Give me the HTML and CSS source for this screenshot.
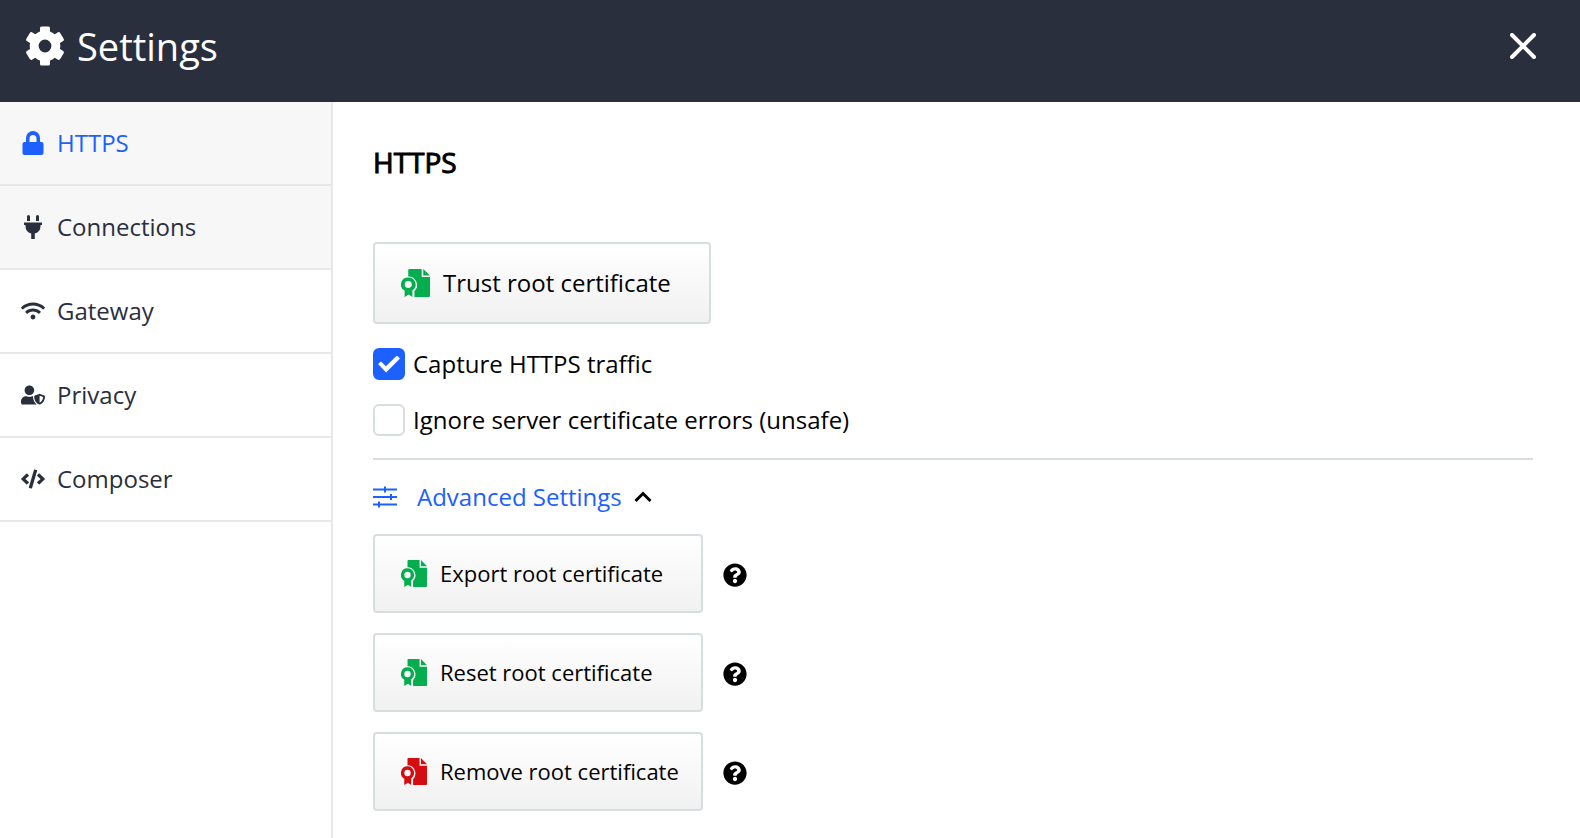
FILE: index.html
```html
<!DOCTYPE html>
<html lang="en">
<head>
<meta charset="utf-8">
<title>Settings</title>
<link rel="stylesheet" href="styles.css">
</head>
<body>
<svg class="sprite" aria-hidden="true">
  <symbol id="certificate" viewBox="0 0 28 28" preserveAspectRatio="none">
    <path d="M7 0H20V8H28V27A1 1 0 0 1 27 28H13V22A8.500 8.500 0 0 0 7 7.500V1A1 1 0 0 1 8 0Z"/>
    <path d="M21.500 0L28 6.500H21.500Z"/>
    <path fill-rule="evenodd" d="M7 8.500A7 7 0 0 1 11 21.300V28L7.500 25.600L3.500 28V21.600A7 7 0 0 1 7 8.500ZM7 12.100A3.400 3.400 0 1 0 7 18.900A3.400 3.400 0 1 0 7 12.100Z"/>
  </symbol>
  <symbol id="question" viewBox="0 0 512 512">
    <path d="M504 256c0 136.997-111.043 248-248 248S8 392.997 8 256C8 119.083 119.043 8 256 8s248 111.083 248 248zM262.655 90c-54.497 0-89.255 22.957-116.549 63.758-3.536 5.286-2.353 12.415 2.715 16.258l34.699 26.310c5.205 3.947 12.621 3.008 16.665-2.122 17.864-22.658 30.113-35.797 57.303-35.797 20.429 0 45.698 13.148 45.698 32.958 0 14.976-12.363 22.667-32.534 33.976C247.128 238.528 216 254.941 216 296v4c0 6.627 5.373 12 12 12h56c6.627 0 12-5.373 12-12v-1.333c0-28.462 83.186-29.647 83.186-106.667 0-58.002-60.165-102-116.531-102zM256 338c-25.365 0-46 20.635-46 46 0 25.364 20.635 46 46 46s46-20.636 46-46c0-25.365-20.635-46-46-46z"/>
  </symbol>
</svg>
<header class="topbar">
  <svg class="gear" viewBox="0 0 40 40" aria-hidden="true">
    <path fill-rule="evenodd" d="M15 2Q15 .5 16.500 .5H23.500Q25 .5 25 2V5.500Q27.600 6.400 29.700 8.300L33 6.300Q34.300 5.700 35.200 6.900L38.800 13Q39.300 14.300 38.200 15.100L35 17Q35.600 20 35 23L38.200 24.900Q39.300 25.700 38.800 27L35.200 33.100Q34.300 34.300 33 33.700L29.700 31.700Q27.600 33.600 25 34.500V38Q25 39.500 23.500 39.500H16.500Q15 39.500 15 38V34.500Q12.400 33.600 10.300 31.700L7 33.700Q5.700 34.300 4.800 33.100L1.200 27Q.7 25.700 1.800 24.900L5 23Q4.400 20 5 17L1.800 15.100Q.7 14.300 1.200 13L4.800 6.900Q5.700 5.700 7 6.300L10.300 8.300Q12.400 6.400 15 5.500ZM20 13.600A6.400 6.400 0 1 0 20 26.400A6.400 6.400 0 1 0 20 13.600Z"/>
  </svg>
  <h1 class="title">Settings</h1>
  <button class="close" type="button" aria-label="Close">
    <svg viewBox="0 0 26 26" aria-hidden="true"><path d="M2 2L24 24M24 2L2 24"/></svg>
  </button>
</header>
<div class="layout">
  <nav class="sidebar" aria-label="Settings sections">
    <a class="item active" href="#https"><svg viewBox="0 0 24 24" aria-hidden="true"><path fill-rule="evenodd" d="M5 11V7A7 7 0 0 1 19 7V11H20.500A2 2 0 0 1 22.500 13V22A2 2 0 0 1 20.500 24H3.500A2 2 0 0 1 1.500 22V13A2 2 0 0 1 3.500 11ZM8.500 11H15.500V7.500A3.500 3.500 0 0 0 8.500 7.500Z"/></svg>HTTPS</a>
    <a class="item hover" href="#connections"><svg viewBox="0 0 24 24" aria-hidden="true"><path d="M6 6V1.500A1.500 1.500 0 0 1 9 1.500V6ZM15 6V1.500A1.500 1.500 0 0 1 18 1.500V6ZM3 7.500H21V10H19.500V11A7.600 7.600 0 0 1 13.800 18.400V24H10.200V18.400A7.600 7.600 0 0 1 4.500 11V10H3Z"/></svg>Connections</a>
    <a class="item" href="#gateway"><svg viewBox="0 0 640 512" aria-hidden="true"><path d="M634.910 154.880C457.740-8.990 182.190-8.930 5.090 154.880c-6.660 6.160-6.790 16.590-.35 22.980l34.240 33.970c6.140 6.100 16.020 6.230 22.400.38 145.920-133.680 371.300-133.710 517.250 0 6.380 5.850 16.260 5.710 22.400-.38l34.240-33.970c6.430-6.390 6.300-16.820-.36-22.980zM320 352c-35.350 0-64 28.650-64 64s28.650 64 64 64 64-28.650 64-64-28.650-64-64-64zm202.670-83.590c-115.260-101.930-290.210-101.820-405.340 0-6.900 6.100-7.120 16.690-.57 23.150l34.440 33.990c6 5.920 15.660 6.320 22.050.8 83.950-72.570 209.740-72.410 293.490 0 6.390 5.520 16.050 5.130 22.050-.8l34.440-33.990c6.560-6.460 6.330-17.060-.56-23.150z"/></svg>Gateway</a>
    <a class="item" href="#privacy"><svg viewBox="0 0 640 512" aria-hidden="true"><path d="M622.300 271.100l-115.200-45c-4.100-1.600-12.600-3.700-22.200 0l-115.200 45c-10.700 4.200-17.700 14-17.700 24.900 0 111.600 68.700 188.800 132.900 213.900 9.600 3.700 18 1.600 22.200 0C558.400 489.900 640 420.500 640 296c0-10.900-7-20.700-17.700-24.900zM496 462.400V273.300l95.500 37.300c-5.600 87.100-60.900 135.400-95.500 151.800zM224 256c70.700 0 128-57.300 128-128S294.700 0 224 0 96 57.300 96 128s57.300 128 128 128zm96 40c0-2.500.8-4.800 1.100-7.200-2.500-.1-4.900-.8-7.500-.8h-16.700c-22.200 10.200-46.900 16-72.900 16s-50.600-5.800-72.900-16h-16.700C60.200 288 0 348.200 0 422.400V464c0 26.500 21.500 48 48 48h352c6.800 0 13.300-1.500 19.200-4-54-42.900-99.200-116.700-99.200-212z"/></svg>Privacy</a>
    <a class="item" href="#composer"><svg viewBox="0 0 640 512" aria-hidden="true"><path d="M278.900 511.500l-61-17.700c-6.400-1.800-10-8.500-8.200-14.900L346.200 8.700c1.800-6.400 8.500-10 14.900-8.200l61 17.700c6.400 1.800 10 8.500 8.200 14.900L293.800 503.300c-1.900 6.400-8.500 10.100-14.900 8.200zm-114-112.200l43.500-46.400c4.600-4.900 4.300-12.700-.8-17.200L117 256l90.600-79.700c5.100-4.500 5.500-12.300.8-17.200l-43.500-46.400c-4.500-4.800-12.100-5.100-17-.5L3.800 247.200c-5.100 4.700-5.100 12.800 0 17.500l144.100 135.100c4.900 4.600 12.500 4.400 17-.5zm327.200.6l144.100-135.100c5.100-4.700 5.100-12.800 0-17.500L492.100 112.100c-4.800-4.500-12.400-4.300-17 .5L431.600 159c-4.600 4.900-4.300 12.700.8 17.200L523 256l-90.600 79.700c-5.100 4.500-5.500 12.300-.8 17.200l43.500 46.400c4.500 4.900 12.100 5.100 17 .6z"/></svg>Composer</a>
  </nav>
  <main class="content">
    <h2 class="heading">HTTPS</h2>
    <button class="btn btn-large" type="button"><svg aria-hidden="true"><use href="#certificate"/></svg>Trust root certificate</button>
    <label class="check"><input type="checkbox" checked>Capture HTTPS traffic</label>
    <label class="check"><input type="checkbox">Ignore server certificate errors (unsafe)</label>
    <hr class="divider">
    <button class="advanced" type="button" aria-expanded="true">
      <svg class="sliders" viewBox="0 0 24 24" aria-hidden="true"><path d="M0 4.500H24M0 12H24M0 19.500H24M12 1.500V7.500M18 9V15M6 16.500V22.500"/></svg>
      Advanced Settings
      <svg class="chevron" viewBox="0 0 18 12" aria-hidden="true"><path d="M1.500 10L9 2.500L16.500 10"/></svg>
    </button>
    <div class="row">
      <button class="btn" type="button"><svg aria-hidden="true"><use href="#certificate"/></svg>Export root certificate</button>
      <button class="help" type="button" aria-label="About exporting"><svg aria-hidden="true"><use href="#question"/></svg></button>
    </div>
    <div class="row">
      <button class="btn" type="button"><svg aria-hidden="true"><use href="#certificate"/></svg>Reset root certificate</button>
      <button class="help" type="button" aria-label="About resetting"><svg aria-hidden="true"><use href="#question"/></svg></button>
    </div>
    <div class="row">
      <button class="btn btn-danger" type="button"><svg aria-hidden="true"><use href="#certificate"/></svg>Remove root certificate</button>
      <button class="help" type="button" aria-label="About removing"><svg aria-hidden="true"><use href="#question"/></svg></button>
    </div>
  </main>
</div>
</body>
</html>
```
FILE: styles.css
```css
* { box-sizing: border-box; }
body {
  margin: 0;
  min-height: 100vh;
  display: flex;
  flex-direction: column;
  background: #fff;
  color: #000;
  font: 400 24px/32px "Open Sans", sans-serif;
}
button { margin: 0; padding: 0; border: 0; background: none; color: inherit; font: inherit; cursor: pointer; }
svg { display: block; flex: none; fill: currentColor; }
.sprite { position: absolute; width: 0; height: 0; }

.topbar {
  display: flex;
  align-items: center;
  gap: 12px;
  padding: 18px 44px 28px 25px;
  background: #2a2f3e;
  color: #fff;
}
.gear { width: 40px; height: 40px; }
.title { margin: 0; font-size: 38px; font-weight: 400; line-height: 56px; }
.close { margin-left: auto; }
.close svg { width: 26px; height: 26px; stroke: currentColor; stroke-width: 4; stroke-linecap: round; }

.layout { flex: 1; display: flex; }
.sidebar { flex: none; width: 333px; border-right: 2px solid #e8e8e8; }
.item {
  display: flex;
  align-items: center;
  gap: 12px;
  padding: 25px 21px;
  border-bottom: 2px solid #e8e8e8;
  color: #2a2f3e;
  text-decoration: none;
}
.item svg { width: 24px; height: 24px; }
.item.active, .item.hover { background: #f7f7f7; }
.item.active { color: #1c61ff; }

.content {
  flex: 1;
  min-width: 0;
  display: flex;
  flex-direction: column;
  align-items: flex-start;
  padding: 40px 47px 26px 40px;
}
.heading {
  margin: 0 0 60px;
  font-size: 28px;
  font-weight: 400;
  line-height: 40px;
  -webkit-text-stroke: 1px currentColor;
}
.btn {
  display: flex;
  align-items: center;
  gap: 13px;
  min-width: 330px;
  padding: 22px 22px 23px 26px;
  border: 2px solid #d8dde0;
  border-radius: 4px;
  background: linear-gradient(#fff, #f1f1f1);
  font-size: 22px;
  line-height: 30px;
  white-space: nowrap;
}
.btn svg { width: 26px; height: 27px; color: #04ad4e; }
.btn-large { padding: 23px 38px 23px 26px; margin-bottom: 24px; font-size: 24px; line-height: 32px; }
.btn-large svg { width: 29px; height: 28px; }
.btn-danger svg { color: #d40d12; }

.check { display: flex; align-items: center; gap: 8px; margin-bottom: 24px; }
.check input {
  appearance: none;
  flex: none;
  width: 32px;
  height: 32px;
  margin: 0;
  border: 2px solid #d8dde0;
  border-radius: 6px;
  background: #fff;
}
.check input:checked { display: grid; place-items: center; border-color: #1c61ff; background: #1c61ff; }
.check input:checked::before {
  content: "";
  width: 22px;
  height: 17px;
  background: #fff;
  clip-path: polygon(0 50%, 14% 35%, 36% 63%, 86% 0, 100% 17%, 37% 100%);
}
.divider { align-self: stretch; height: 2px; margin: -2px 0 21px; border: 0; background: #d8dde0; }

.advanced { display: flex; align-items: center; gap: 12px; margin-bottom: 21px; color: #1c61ff; }
.sliders { width: 24px; height: 24px; margin-right: 8px; stroke: currentColor; stroke-width: 2; }
.chevron { width: 18px; height: 12px; fill: none; stroke: #000; stroke-width: 3; }

.row { display: flex; align-items: center; gap: 20px; margin-bottom: 20px; }
.row:last-child { margin-bottom: 0; }
.help { padding-top: 3px; }
.help svg { width: 24px; height: 24px; }
```
